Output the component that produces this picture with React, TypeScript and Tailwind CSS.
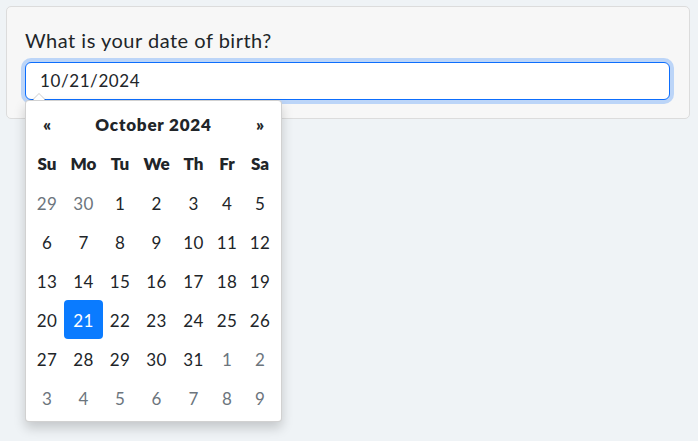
import React from "react";

const cols = [34, 39, 34, 39, 35, 32, 34];
const names = ["Su", "Mo", "Tu", "We", "Th", "Fr", "Sa"];
const weeks: [number, boolean][][] = [
  [[29, true], [30, true], [1, false], [2, false], [3, false], [4, false], [5, false]],
  [[6, false], [7, false], [8, false], [9, false], [10, false], [11, false], [12, false]],
  [[13, false], [14, false], [15, false], [16, false], [17, false], [18, false], [19, false]],
  [[20, false], [21, false], [22, false], [23, false], [24, false], [25, false], [26, false]],
  [[27, false], [28, false], [29, false], [30, false], [31, false], [1, true], [2, true]],
  [[3, true], [4, true], [5, true], [6, true], [7, true], [8, true], [9, true]],
];

export default function App() {
  return (
    <div
      className="w-[698px] h-[441px] bg-[#eff3f6] p-[6px] relative overflow-hidden"
      style={{ fontFamily: "Lato, 'Noto Sans', sans-serif" }}
    >
      <div className="w-[684px] bg-[#f7f7f7] border border-[#dcdcdc] rounded-[5px] pt-[21px] pb-[18px] pl-[18px] pr-[19px]">
        <div className="text-[20px] leading-[24px] tracking-[0.5px] text-[#212529] mb-[10px]">What is your date of birth?</div>
        <div className="relative">
          <div className="h-[38px] bg-white border border-[#0d6efd] rounded-[6px] shadow-[0_0_0_4px_rgba(13,110,253,0.25)] flex items-center pl-[14px] text-[17px] tracking-[0.6px] text-[#212529]">
            10/21/2024
          </div>
          {/* popup */}
          <div className="absolute left-0 top-[38px] z-10">
            <div className="absolute left-[7px] top-[-7px] w-0 h-0 border-l-[7px] border-r-[7px] border-b-[7px] border-l-transparent border-r-transparent border-b-[rgba(0,0,0,0.2)]" />
            <div className="absolute left-[8px] top-[-6px] w-0 h-0 border-l-[6px] border-r-[6px] border-b-[6px] border-l-transparent border-r-transparent border-b-white" />
            <div className="w-[257px] bg-white border border-[rgba(0,0,0,0.18)] rounded-[4px] shadow-[0_6px_12px_rgba(0,0,0,0.18)] p-[4px] text-[#212529]">
              <div className="flex h-[39px] items-center font-extrabold text-[17px]">
                <div className="w-[34px] text-center">«</div>
                <div className="flex-1 text-center tracking-[0.8px]">October 2024</div>
                <div className="w-[34px] text-center">»</div>
              </div>
              <div className="flex h-[39px] items-center font-extrabold text-[17px]">
                {names.map((n, i) => (
                  <div key={n} style={{ width: cols[i] }} className="text-center">
                    {n}
                  </div>
                ))}
              </div>
              {weeks.map((w, ri) => (
                <div key={ri} className="flex h-[39px] items-center text-[17px]">
                  {w.map(([d, other], i) => {
                    const sel = ri === 3 && i === 1;
                    return (
                      <div
                        key={i}
                        style={{ width: cols[i] }}
                        className={
                          "h-[39px] flex items-center justify-center pt-[3px] tracking-[0.3px] " +
                          (sel
                            ? "bg-[#0a7bff] text-white rounded-[4px]"
                            : other
                            ? "text-[#6c757d]"
                            : "text-[#212529]")
                        }
                      >
                        {d}
                      </div>
                    );
                  })}
                </div>
              ))}
            </div>
          </div>
        </div>
      </div>
    </div>
  );
}
